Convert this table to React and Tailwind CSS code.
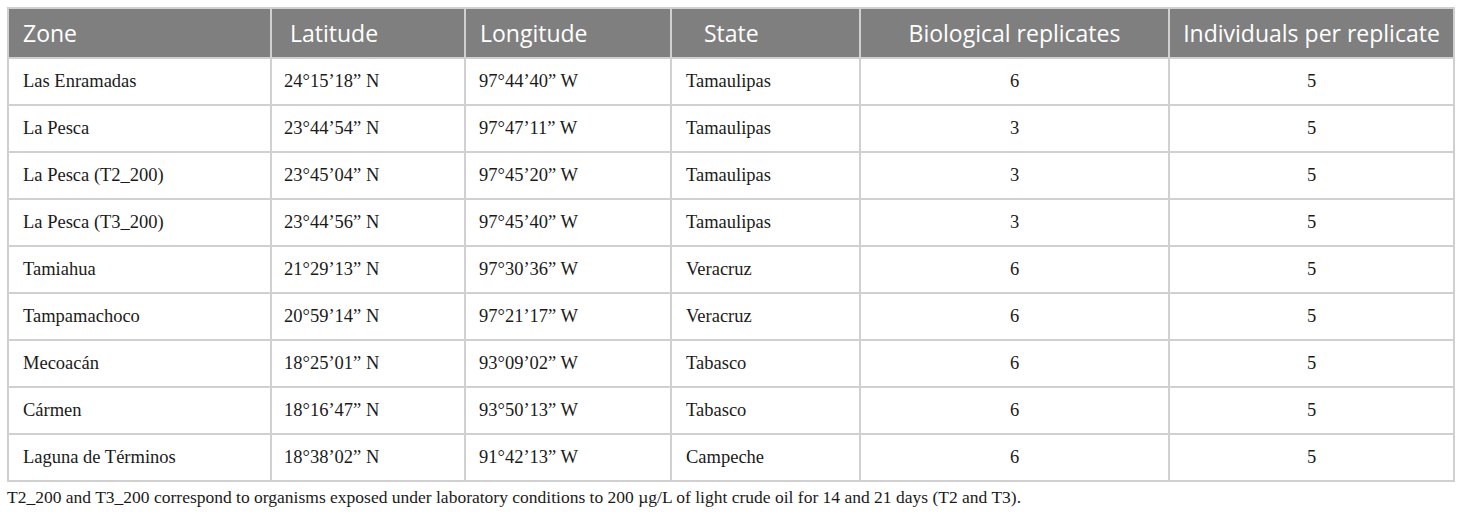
const rows = [
  ["Las Enramadas", "24°15’18” N", "97°44’40” W", "Tamaulipas", "6", "5"],
  ["La Pesca", "23°44’54” N", "97°47’11” W", "Tamaulipas", "3", "5"],
  ["La Pesca (T2_200)", "23°45’04” N", "97°45’20” W", "Tamaulipas", "3", "5"],
  ["La Pesca (T3_200)", "23°44’56” N", "97°45’40” W", "Tamaulipas", "3", "5"],
  ["Tamiahua", "21°29’13” N", "97°30’36” W", "Veracruz", "6", "5"],
  ["Tampamachoco", "20°59’14” N", "97°21’17” W", "Veracruz", "6", "5"],
  ["Mecoacán", "18°25’01” N", "93°09’02” W", "Tabasco", "6", "5"],
  ["Cármen", "18°16’47” N", "93°50’13” W", "Tabasco", "6", "5"],
  ["Laguna de Términos", "18°38’02” N", "91°42’13” W", "Campeche", "6", "5"],
];

const headCell = "border-2 border-[#d0d0d0] h-[50px] font-['Open_Sans',sans-serif] text-[23px] font-normal text-white";
const bodyCell = "border-2 border-[#d0d0d0] h-[47px] text-[18.5px] text-[#1a1a1a]";

export default function App() {
  return (
    <div className="bg-white w-[1460px] h-[517px] pt-[7px] pl-[7px] font-['Liberation_Serif',serif]">
      <table className="border-collapse w-[1446px] table-fixed">
        <colgroup>
          <col className="w-[263px]" />
          <col className="w-[194px]" />
          <col className="w-[206px]" />
          <col className="w-[189px]" />
          <col className="w-[309px]" />
          <col className="w-[285px]" />
        </colgroup>
        <thead>
          <tr className="bg-[#7f7f7f]">
            <th className={`${headCell} text-left pl-[14px]`}>Zone</th>
            <th className={`${headCell} text-left pl-[18px]`}>Latitude</th>
            <th className={`${headCell} text-left pl-[14px]`}>Longitude</th>
            <th className={`${headCell} text-left pl-[32px]`}>State</th>
            <th className={`${headCell} text-center`}>Biological replicates</th>
            <th className={`${headCell} text-center`}>Individuals per replicate</th>
          </tr>
        </thead>
        <tbody>
          {rows.map((r) => (
            <tr key={r[0]}>
              <td className={`${bodyCell} pl-[14px]`}>{r[0]}</td>
              <td className={`${bodyCell} pl-[12px]`}>{r[1]}</td>
              <td className={`${bodyCell} pl-[13px]`}>{r[2]}</td>
              <td className={`${bodyCell} pl-[14px]`}>{r[3]}</td>
              <td className={`${bodyCell} text-center`}>{r[4]}</td>
              <td className={`${bodyCell} text-center`}>{r[5]}</td>
            </tr>
          ))}
        </tbody>
      </table>
      <p className="mt-[4px] text-[17.5px] text-[#1a1a1a] leading-[22px]">
        T2_200 and T3_200 correspond to organisms exposed under laboratory conditions to 200 µg/L of light crude oil for 14 and 21 days (T2 and T3).
      </p>
    </div>
  );
}
